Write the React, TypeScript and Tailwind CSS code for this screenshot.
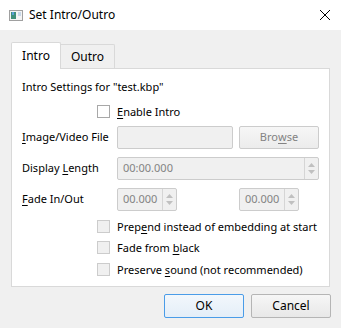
import React from 'react';

const font = { fontFamily: '"Noto Sans", "Segoe UI", sans-serif' };

const Ul: React.FC<{ children: React.ReactNode }> = ({ children }) => (
    <span className="underline underline-offset-2 decoration-1">{children}</span>
);

const CheckBox: React.FC<{ disabled?: boolean }> = ({ disabled }) => (
    <span
        className={`block shrink-0 w-[13px] h-[13px] border ${disabled ? 'border-[#cccccc] bg-[#f0f0f0]' : 'border-[#a8a8a8] bg-white'}`}
    />
);

const Arrows: React.FC = () => (
    <div className="w-[14px] h-full border-l border-[#d5d5d5] flex flex-col items-center justify-center gap-[3px]">
        <svg width="7" height="4" viewBox="0 0 7 4"><path d="M0 4 L3.5 0 L7 4 Z" fill="#c0c0c0" /></svg>
        <svg width="7" height="4" viewBox="0 0 7 4"><path d="M0 0 L3.5 4 L7 0 Z" fill="#c0c0c0" /></svg>
    </div>
);

const SpinBox: React.FC<{ value: string; width: string }> = ({ value, width }) => (
    <div className={`${width} h-[23px] border border-[#cccccc] rounded-[2px] bg-[#f0f0f0] flex items-center`}>
        <span className="flex-1 pl-[5px] text-[#838383]">{value}</span>
        <Arrows />
    </div>
);

const CheckRow: React.FC<{ children: React.ReactNode; mt: string }> = ({ children, mt }) => (
    <div className={`flex items-center h-[13px] ${mt}`}>
        <div className="w-[75px] shrink-0" />
        <CheckBox disabled />
        <span className="ml-[7px] leading-none whitespace-nowrap">{children}</span>
    </div>
);

export default function App() {
    return (
        <div className="w-[341px] h-[328px] bg-[#f0f0f0] flex flex-col text-[11px] text-black" style={font}>
            {/* Title bar */}
            <div className="h-[30px] bg-white flex items-center pl-[9px] pr-[10px]">
                <svg width="14" height="11" viewBox="0 0 14 11">
                    <rect x="0.5" y="0.5" width="13" height="10" fill="#f4f4f4" stroke="#a0a0a0" />
                    <rect x="2" y="2" width="5" height="7" fill="#3f8f7a" />
                    <rect x="3" y="2" width="2" height="3" fill="#5aa0d8" />
                    <rect x="9" y="2" width="3" height="4" fill="#c8d8e8" />
                </svg>
                <span className="ml-[6px] flex-1 text-[12px]">Set Intro/Outro</span>
                <svg width="12" height="12" viewBox="0 0 12 12">
                    <path d="M1 1 L11 11 M11 1 L1 11" stroke="#000" strokeWidth="1" />
                </svg>
            </div>

            <div className="pl-[11px] pt-[11px] flex flex-col">
                {/* Tabs */}
                <div className="flex items-end h-[27px]">
                    <div className="w-[50px] h-[27px] bg-white border border-[#d9d9d9] border-b-0 rounded-t-[2px] flex items-center justify-center -mb-px relative z-10 text-[12px]">
                        Intro
                    </div>
                    <div className="w-[54px] h-[24px] bg-[#f0f0f0] border border-[#d9d9d9] border-l-0 border-b-0 rounded-tr-[2px] flex items-center justify-center text-[12px]">
                        Outro
                    </div>
                </div>

                {/* Panel */}
                <div className="w-[319px] h-[219px] bg-white border border-[#d9d9d9] pl-[10px] pt-[8px] flex flex-col">
                    <div className="h-[20px] flex items-center">Intro Settings for "test.kbp"</div>

                    <div className="flex items-center h-[13px] mt-[8px]">
                        <div className="w-[75px]" />
                        <CheckBox />
                        <span className="ml-[7px] leading-none"><Ul>E</Ul>nable Intro</span>
                    </div>

                    <div className="flex items-center h-[23px] mt-[8px]">
                        <div className="w-[95px] whitespace-nowrap"><Ul>I</Ul>mage/Video File</div>
                        <div className="w-[116px] h-[23px] border border-[#cccccc] rounded-[2px] bg-[#f0f0f0]" />
                        <div className="ml-[6px] w-[80px] h-[23px] border border-[#cccccc] rounded-[2px] bg-gradient-to-b from-[#f6f6f6] to-[#ececec] flex items-center justify-center text-[#838383]">
                            Bro<Ul>w</Ul>se
                        </div>
                    </div>

                    <div className="flex items-center h-[23px] mt-[8px]">
                        <div className="w-[95px]">Display <Ul>L</Ul>ength</div>
                        <SpinBox value="00:00.000" width="w-[202px]" />
                    </div>

                    <div className="flex items-center h-[23px] mt-[8px]">
                        <div className="w-[95px]"><Ul>F</Ul>ade In/Out</div>
                        <SpinBox value="00.000" width="w-[60px]" />
                        <div className="w-[62px]" />
                        <SpinBox value="00.000" width="w-[60px]" />
                    </div>

                    <CheckRow mt="mt-[9px]">Prep<Ul>e</Ul>nd instead of embedding at start</CheckRow>
                    <CheckRow mt="mt-[8px]">Fade from <Ul>b</Ul>lack</CheckRow>
                    <CheckRow mt="mt-[9px]">Preserve <Ul>s</Ul>ound (not recommended)</CheckRow>
                </div>

                {/* Buttons */}
                <div className="flex justify-end gap-[7px] mt-[7px] pr-[10px] text-[12px]">
                    <div className="w-[80px] h-[24px] border border-[#4a9ce8] rounded-[2px] bg-gradient-to-b from-[#f2f7fc] to-[#e4eef8] flex items-center justify-center">
                        OK
                    </div>
                    <div className="w-[80px] h-[24px] border border-[#b5b5b5] rounded-[2px] bg-gradient-to-b from-[#f6f6f6] to-[#e8e8e8] flex items-center justify-center">
                        Cancel
                    </div>
                </div>
            </div>
        </div>
    );
}
